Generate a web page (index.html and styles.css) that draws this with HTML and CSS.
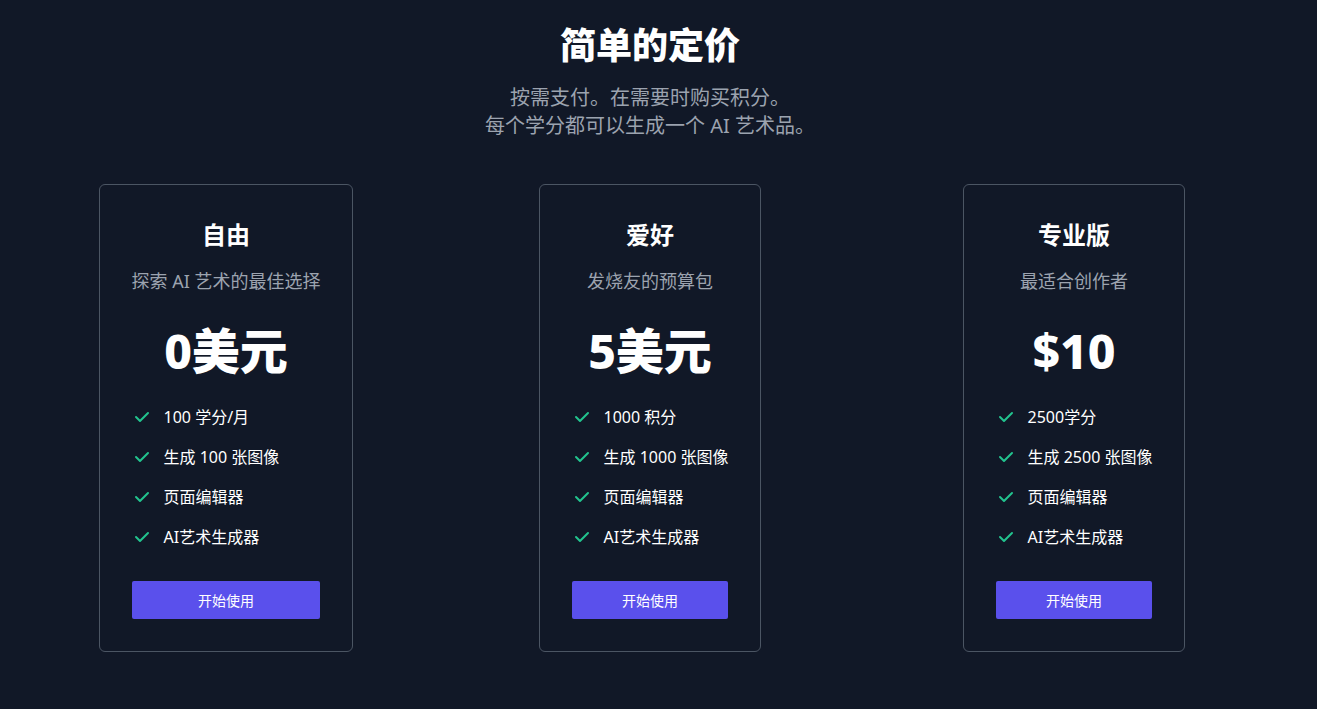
FILE: index.html
```html
<!DOCTYPE html>
<html lang="zh-CN">
<head>
    <meta charset="UTF-8">
    <meta name="viewport" content="width=device-width, initial-scale=1.0">
    <title>简单的定价</title>
    <link rel="stylesheet" href="styles.css">
</head>
<body>
    <section class="pricing">
        <header class="pricing-header">
            <h1>简单的定价</h1>
            <p>按需支付。在需要时购买积分。<br>每个学分都可以生成一个 AI 艺术品。</p>
        </header>

        <div class="plans">
            <div class="plan-col">
                <div class="plan">
                    <h2>自由</h2>
                    <p class="plan-desc">探索 AI 艺术的最佳选择</p>
                    <div class="price">0美元</div>
                    <ul class="features">
                        <li><svg class="check" viewBox="0 0 20 20"><path d="M16.707 5.293a1 1 0 010 1.414l-8 8a1 1 0 01-1.414 0l-4-4a1 1 0 011.414-1.414L8 12.586l7.293-7.293a1 1 0 011.414 0z"/></svg><span>100 学分/月</span></li>
                        <li><svg class="check" viewBox="0 0 20 20"><path d="M16.707 5.293a1 1 0 010 1.414l-8 8a1 1 0 01-1.414 0l-4-4a1 1 0 011.414-1.414L8 12.586l7.293-7.293a1 1 0 011.414 0z"/></svg><span>生成 100 张图像</span></li>
                        <li><svg class="check" viewBox="0 0 20 20"><path d="M16.707 5.293a1 1 0 010 1.414l-8 8a1 1 0 01-1.414 0l-4-4a1 1 0 011.414-1.414L8 12.586l7.293-7.293a1 1 0 011.414 0z"/></svg><span>页面编辑器</span></li>
                        <li><svg class="check" viewBox="0 0 20 20"><path d="M16.707 5.293a1 1 0 010 1.414l-8 8a1 1 0 01-1.414 0l-4-4a1 1 0 011.414-1.414L8 12.586l7.293-7.293a1 1 0 011.414 0z"/></svg><span>AI艺术生成器</span></li>
                    </ul>
                    <button class="start-button">开始使用</button>
                </div>
            </div>

            <div class="plan-col">
                <div class="plan">
                    <h2>爱好</h2>
                    <p class="plan-desc">发烧友的预算包</p>
                    <div class="price">5美元</div>
                    <ul class="features">
                        <li><svg class="check" viewBox="0 0 20 20"><path d="M16.707 5.293a1 1 0 010 1.414l-8 8a1 1 0 01-1.414 0l-4-4a1 1 0 011.414-1.414L8 12.586l7.293-7.293a1 1 0 011.414 0z"/></svg><span>1000 积分</span></li>
                        <li><svg class="check" viewBox="0 0 20 20"><path d="M16.707 5.293a1 1 0 010 1.414l-8 8a1 1 0 01-1.414 0l-4-4a1 1 0 011.414-1.414L8 12.586l7.293-7.293a1 1 0 011.414 0z"/></svg><span>生成 1000 张图像</span></li>
                        <li><svg class="check" viewBox="0 0 20 20"><path d="M16.707 5.293a1 1 0 010 1.414l-8 8a1 1 0 01-1.414 0l-4-4a1 1 0 011.414-1.414L8 12.586l7.293-7.293a1 1 0 011.414 0z"/></svg><span>页面编辑器</span></li>
                        <li><svg class="check" viewBox="0 0 20 20"><path d="M16.707 5.293a1 1 0 010 1.414l-8 8a1 1 0 01-1.414 0l-4-4a1 1 0 011.414-1.414L8 12.586l7.293-7.293a1 1 0 011.414 0z"/></svg><span>AI艺术生成器</span></li>
                    </ul>
                    <button class="start-button">开始使用</button>
                </div>
            </div>

            <div class="plan-col">
                <div class="plan">
                    <h2>专业版</h2>
                    <p class="plan-desc">最适合创作者</p>
                    <div class="price">$10</div>
                    <ul class="features">
                        <li><svg class="check" viewBox="0 0 20 20"><path d="M16.707 5.293a1 1 0 010 1.414l-8 8a1 1 0 01-1.414 0l-4-4a1 1 0 011.414-1.414L8 12.586l7.293-7.293a1 1 0 011.414 0z"/></svg><span>2500学分</span></li>
                        <li><svg class="check" viewBox="0 0 20 20"><path d="M16.707 5.293a1 1 0 010 1.414l-8 8a1 1 0 01-1.414 0l-4-4a1 1 0 011.414-1.414L8 12.586l7.293-7.293a1 1 0 011.414 0z"/></svg><span>生成 2500 张图像</span></li>
                        <li><svg class="check" viewBox="0 0 20 20"><path d="M16.707 5.293a1 1 0 010 1.414l-8 8a1 1 0 01-1.414 0l-4-4a1 1 0 011.414-1.414L8 12.586l7.293-7.293a1 1 0 011.414 0z"/></svg><span>页面编辑器</span></li>
                        <li><svg class="check" viewBox="0 0 20 20"><path d="M16.707 5.293a1 1 0 010 1.414l-8 8a1 1 0 01-1.414 0l-4-4a1 1 0 011.414-1.414L8 12.586l7.293-7.293a1 1 0 011.414 0z"/></svg><span>AI艺术生成器</span></li>
                    </ul>
                    <button class="start-button">开始使用</button>
                </div>
            </div>
        </div>
    </section>
</body>
</html>
```

FILE: styles.css
```css
html, body {
    margin: 0;
    height: 100%;
}

body {
    font-family: "Noto Sans", "Noto Sans CJK SC", sans-serif;
    background-color: #111827;
    color: #ffffff;
    overflow: hidden;
}

.pricing {
    width: 1300px;
    padding-top: 26px;
}

.pricing-header {
    text-align: center;
}

.pricing-header h1 {
    margin: 0;
    font-size: 36px;
    line-height: 40px;
    font-weight: 800;
}

.pricing-header p {
    margin: 18px 0 0;
    font-size: 20px;
    line-height: 28px;
    color: #9ca3af;
}

.plans {
    display: grid;
    grid-template-columns: repeat(3, 424px);
    justify-content: center;
    margin-top: 44px;
}

.plan-col {
    display: flex;
    justify-content: center;
}

.plan {
    display: flex;
    flex-direction: column;
    align-items: stretch;
    padding: 34px 32px 32px;
    border: 1px solid #4b5563;
    border-radius: 6px;
    text-align: center;
}

.plan h2 {
    margin: 0;
    font-size: 24px;
    line-height: 32px;
    font-weight: 700;
}

.plan-desc {
    margin: 16px 0 0;
    font-size: 18px;
    line-height: 28px;
    color: #9ca3af;
    white-space: nowrap;
}

.price {
    margin-top: 32px;
    font-size: 48px;
    line-height: 48px;
    font-weight: 800;
}

.features {
    list-style: none;
    margin: 30px 0 0;
    padding: 0;
    display: flex;
    flex-direction: column;
    gap: 16px;
    text-align: left;
}

.features li {
    display: flex;
    align-items: center;
    gap: 12px;
    font-size: 16px;
    line-height: 24px;
    white-space: nowrap;
}

.check {
    width: 20px;
    height: 20px;
    flex-shrink: 0;
    fill: #22c38e;
}

.start-button {
    margin-top: 32px;
    height: 38px;
    border: none;
    border-radius: 2px;
    background-color: #5a50ec;
    color: #ffffff;
    font-family: inherit;
    font-size: 14px;
    cursor: pointer;
}
```
